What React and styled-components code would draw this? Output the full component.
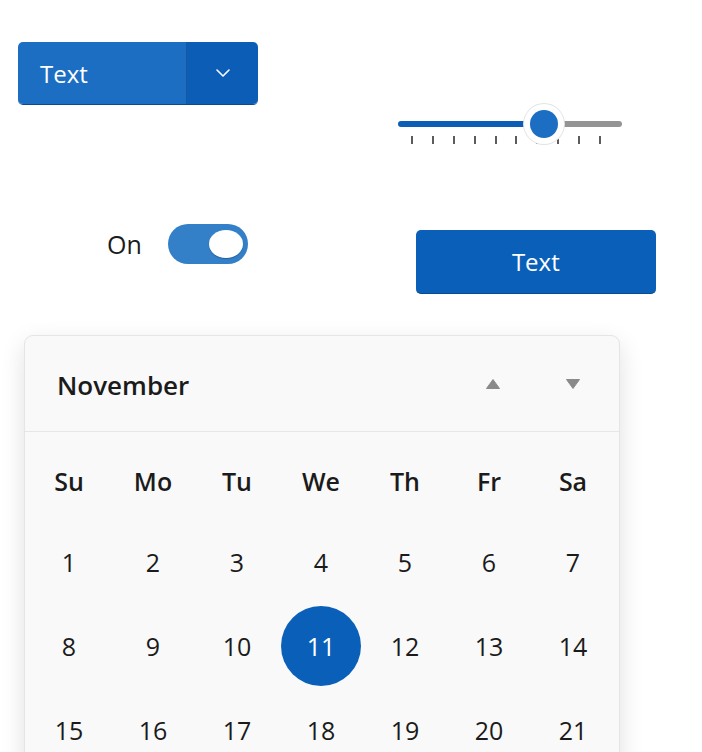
import React from 'react';
import styled, { createGlobalStyle } from 'styled-components';

const GlobalStyle = createGlobalStyle`
    body {
        margin: 0;
        background: #ffffff;
        font-family: "Open Sans", "Noto Sans", sans-serif;
        color: #1b1b1b;
    }
`;

const Page = styled.div`
    width: 702px;
    height: 752px;
    overflow: hidden;
    padding-top: 42px;
    box-sizing: border-box;
`;

const Row = styled.div`
    display: flex;
    align-items: flex-start;
    margin-top: ${(p) => p.top || 0}px;
`;

const SplitButton = styled.div`
    display: flex;
    margin-left: 18px;
    width: 240px;
    height: 63px;
    border-radius: 5px;
    overflow: hidden;
    border-bottom: 1px solid #0d4a8c;
    box-sizing: border-box;
`;

const SplitMain = styled.div`
    flex: 1;
    display: flex;
    align-items: center;
    padding-left: 22px;
    background: #1b6ec2;
    color: #ffffff;
    font-size: 24px;
    border-right: 1px solid #17599e;
`;

const SplitDrop = styled.div`
    width: 71px;
    display: flex;
    align-items: center;
    justify-content: center;
    background: #0b5db6;
`;

const Slider = styled.div`
    position: relative;
    margin-left: 140px;
    margin-top: 62px;
    width: 224px;
    height: 44px;
`;

const Track = styled.div`
    display: flex;
    margin-top: 17px;
    height: 6px;
    border-radius: 3px;
    overflow: hidden;
`;

const TrackFill = styled.div`
    width: ${(p) => p.pct}%;
    background: #0b5db6;
`;

const TrackRest = styled.div`
    flex: 1;
    background: #949494;
`;

const Ticks = styled.div`
    display: flex;
    justify-content: space-between;
    margin: 9px 21px 0 13px;
`;

const Tick = styled.div`
    width: 2px;
    height: 8px;
    background: #5c5c5c;
`;

const Thumb = styled.div`
    position: absolute;
    top: 0;
    left: 126px;
    width: 40px;
    height: 40px;
    border-radius: 50%;
    background: #ffffff;
    box-shadow: 0 0 0 1px #e4e4e4;
    display: flex;
    align-items: center;
    justify-content: center;

    &::after {
        content: '';
        width: 28px;
        height: 28px;
        border-radius: 50%;
        background: #1b6ec2;
    }
`;

const ToggleGroup = styled.div`
    display: flex;
    align-items: center;
    gap: 26px;
    margin-left: 107px;
`;

const ToggleLabel = styled.span`
    font-size: 25px;
    color: #1b1b1b;
`;

const Toggle = styled.div`
    width: 80px;
    height: 40px;
    border-radius: 20px;
    background: #3380c8;
    display: flex;
    align-items: center;
    justify-content: flex-end;
    padding-right: 5px;
    box-sizing: border-box;
`;

const Knob = styled.div`
    width: 34px;
    height: 28px;
    border-radius: 50%;
    background: #ffffff;
    box-shadow: 0 1px 1px rgba(0, 40, 90, 0.35);
`;

const PrimaryButton = styled.button`
    margin-left: 168px;
    margin-top: 6px;
    width: 240px;
    height: 64px;
    border: none;
    border-bottom: 1px solid #0d4a8c;
    border-radius: 5px;
    background: #0a60b9;
    color: #ffffff;
    font-family: inherit;
    font-size: 24px;
`;

const Calendar = styled.div`
    margin: 41px 0 0 24px;
    width: 596px;
    background: #f9f9f9;
    border: 1px solid #e5e5e5;
    border-radius: 9px;
    box-shadow: 0 8px 24px rgba(0, 0, 0, 0.12);
    box-sizing: border-box;
`;

const CalHeader = styled.div`
    display: flex;
    align-items: center;
    height: 95px;
    padding: 0 6px 0 32px;
    border-bottom: 1px solid #e6e6e6;
`;

const Month = styled.div`
    flex: 1;
    font-size: 26px;
    font-weight: 600;
    color: #1b1b1b;
    padding-top: 2px;
`;

const NavButton = styled.div`
    width: 80px;
    display: flex;
    justify-content: center;
`;

const DayGrid = styled.div`
    display: grid;
    grid-template-columns: repeat(7, 84px);
    grid-template-rows: 88px;
    grid-auto-rows: 84px;
    padding: 0 2px;
`;

const DayName = styled.div`
    display: flex;
    align-items: center;
    justify-content: center;
    font-size: 25px;
    font-weight: 600;
    color: #1b1b1b;
    padding-top: 10px;
`;

const Day = styled.div`
    display: flex;
    align-items: center;
    justify-content: center;
    font-size: 25px;
    color: ${(p) => (p.selected ? '#ffffff' : '#1b1b1b')};

    span {
        width: 80px;
        height: 80px;
        border-radius: 50%;
        display: flex;
        align-items: center;
        justify-content: center;
        background: ${(p) => (p.selected ? '#0a60b9' : 'transparent')};
    }
`;

const Chevron = () => (
    <svg width="16" height="10" viewBox="0 0 16 10">
        <path d="M2 2 L8 8 L14 2" fill="none" stroke="#ffffff" strokeWidth="1.6" strokeLinecap="round" strokeLinejoin="round" />
    </svg>
);

const Triangle = ({ up }) => (
    <svg width="16" height="12" viewBox="0 0 16 12">
        <path d={up ? 'M8 1.5 L14.5 10.5 L1.5 10.5 Z' : 'M1.5 1.5 L14.5 1.5 L8 10.5 Z'} fill="#8a8a8a" strokeLinejoin="round" stroke="#8a8a8a" strokeWidth="1" />
    </svg>
);

const dayNames = ['Su', 'Mo', 'Tu', 'We', 'Th', 'Fr', 'Sa'];
const days = Array.from({ length: 21 }, (_, i) => i + 1);

const App = () => (
    <Page>
        <GlobalStyle />
        <Row>
            <SplitButton>
                <SplitMain>Text</SplitMain>
                <SplitDrop><Chevron /></SplitDrop>
            </SplitButton>
            <Slider>
                <Track>
                    <TrackFill pct={65} />
                    <TrackRest />
                </Track>
                <Ticks>
                    {Array.from({ length: 10 }, (_, i) => <Tick key={i} />)}
                </Ticks>
                <Thumb />
            </Slider>
        </Row>
        <Row top={76}>
            <ToggleGroup>
                <ToggleLabel>On</ToggleLabel>
                <Toggle><Knob /></Toggle>
            </ToggleGroup>
            <PrimaryButton>Text</PrimaryButton>
        </Row>
        <Calendar>
            <CalHeader>
                <Month>November</Month>
                <NavButton><Triangle up /></NavButton>
                <NavButton><Triangle /></NavButton>
            </CalHeader>
            <DayGrid>
                {dayNames.map((d) => <DayName key={d}>{d}</DayName>)}
                {days.map((d) => (
                    <Day key={d} selected={d === 11}><span>{d}</span></Day>
                ))}
            </DayGrid>
        </Calendar>
    </Page>
);

export default App;
